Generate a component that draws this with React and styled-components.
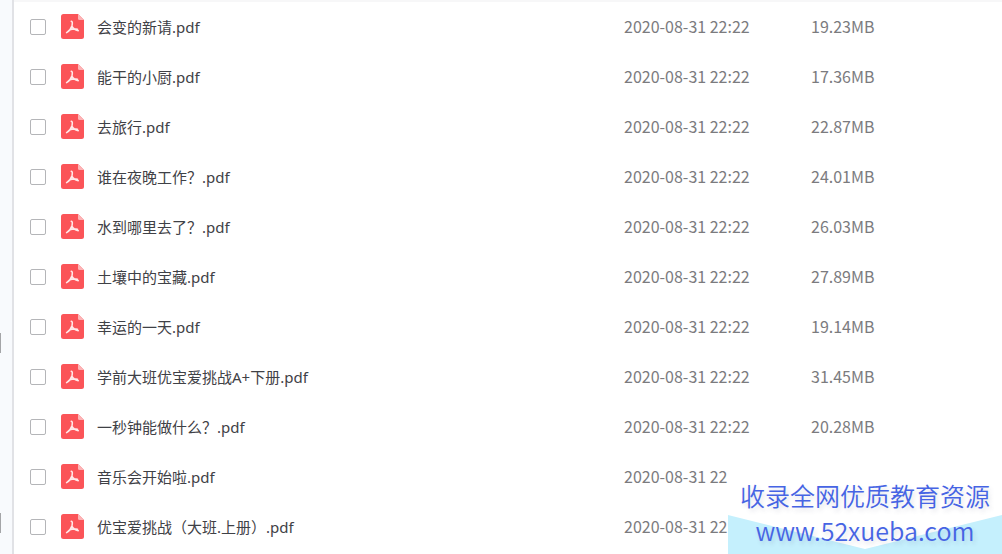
import React from "react";
import styled, { createGlobalStyle } from "styled-components";

const GlobalStyle = createGlobalStyle`
  *, *::before, *::after { box-sizing: border-box; }
  body { margin: 0; background: #fff; font-family: "Noto Sans CJK SC", "Noto Sans", sans-serif; }
`;

const Page = styled.div`
  position: relative;
  display: flex;
  min-height: 100vh;
  overflow: hidden;
`;

const Rail = styled.aside`
  display: flex;
  flex-direction: column;
  justify-content: flex-end;
  gap: 160px;
  width: 14px;
  flex: none;
  padding-bottom: 21px;
  background: #f8fafd;
  border-right: 2px solid #e1e2e6;
`;

const RailMark = styled.span`
  width: 1px;
  height: 20px;
  background: #a4a5a8;
`;

const Main = styled.main`
  flex: 1;
  min-width: 0;
  border-top: 2px solid #f7f7f8;
`;

const Table = styled.table`
  width: 100%;
  table-layout: fixed;
  border-collapse: collapse;
`;

const Row = styled.tr`
  height: 50px;
`;

const Cell = styled.td`
  padding: 0 0 1px;
`;

const MetaCell = styled.td`
  width: ${(p) => p.$width};
  padding: 0 0 3px;
  color: #7b7b7e;
  font-size: 16px;
  line-height: 24px;
  white-space: nowrap;
`;

const FileLabel = styled.label`
  display: flex;
  align-items: center;
  padding-left: 16px;
  color: #3f4146;
  font-family: "Noto Sans", "Noto Sans CJK SC", sans-serif;
  font-size: 15px;
  line-height: 24px;
  white-space: nowrap;
`;

const Checkbox = styled.input`
  appearance: none;
  width: 16px;
  height: 16px;
  margin: 0 15px 0 0;
  background: #fff;
  border: 1px solid #b4b5b8;
  border-radius: 2px;
  &:checked { background: #4a7cf5; }
`;

const PdfSvg = styled.svg`
  flex: none;
  width: 23px;
  height: 25px;
  margin-right: 13px;
`;

const Banner = styled.aside`
  position: absolute;
  right: 0;
  bottom: 0;
  display: flex;
  flex-direction: column;
  align-items: center;
  width: 274px;
  height: 86px;
  padding-top: 10px;
  background: #fff;
  color: #4664e4;
  font-size: 25px;
  font-weight: 350;
  line-height: 35px;
  text-shadow: 2px 3px 4px rgba(80, 80, 120, 0.16);
`;

const BannerArt = styled.svg`
  position: absolute;
  left: 0;
  bottom: 0;
  width: 100%;
  height: 39px;
`;

const BannerText = styled.span`
  position: relative;
  white-space: nowrap;
`;

const BannerLink = styled.a`
  position: relative;
  color: inherit;
  text-decoration: none;
`;

const files = [
  ["会变的新请.pdf", "19.23MB"],
  ["能干的小厨.pdf", "17.36MB"],
  ["去旅行.pdf", "22.87MB"],
  ["谁在夜晚工作？.pdf", "24.01MB"],
  ["水到哪里去了？.pdf", "26.03MB"],
  ["土壤中的宝藏.pdf", "27.89MB"],
  ["幸运的一天.pdf", "19.14MB"],
  ["学前大班优宝爱挑战A+下册.pdf", "31.45MB"],
  ["一秒钟能做什么？.pdf", "20.28MB"],
  ["音乐会开始啦.pdf", ""],
  ["优宝爱挑战（大班.上册）.pdf", ""],
];

function PdfIcon() {
  return (
    <PdfSvg viewBox="0 0 23 25" aria-hidden="true">
      <path d="M2.5 0H17L23 6V22.5Q23 25 20.5 25H2.5Q0 25 0 22.5V2.5Q0 0 2.5 0Z" fill="#fb5458" />
      <path d="M17 0L23 6H18.5Q17 6 17 4.5Z" fill="#fdb4b6" />
      <path
        d="M10.3 7.2C11.7 7.6 11.4 10 10.9 12C10.2 14.2 8 17.4 5.6 18.6M10.9 12.2C12 14.4 14 16 17.2 16.6M8.4 15.9C10.6 15 13.4 14.6 16.4 15.2"
        fill="none"
        stroke="#ffe9e9"
        strokeWidth="1.6"
        strokeLinecap="round"
      />
    </PdfSvg>
  );
}

export default function App() {
  return (
    <>
      <GlobalStyle />
      <Page>
        <Rail>
          <RailMark />
          <RailMark />
        </Rail>
        <Main>
          <Table>
            <tbody>
              {files.map(([name, size]) => (
                <Row key={name}>
                  <Cell>
                    <FileLabel>
                      <Checkbox type="checkbox" />
                      <PdfIcon />
                      {name}
                    </FileLabel>
                  </Cell>
                  <MetaCell $width="187px">2020-08-31 22:22</MetaCell>
                  <MetaCell $width="191px">{size}</MetaCell>
                </Row>
              ))}
            </tbody>
          </Table>
        </Main>
        <Banner>
          <BannerArt viewBox="0 0 274 39" preserveAspectRatio="none" aria-hidden="true">
            <path d="M0 0L137 34L274 0V39H0Z" fill="#c5f0fd" />
          </BannerArt>
          <BannerText>收录全网优质教育资源</BannerText>
          <BannerLink href="#">www.52xueba.com</BannerLink>
        </Banner>
      </Page>
    </>
  );
}
